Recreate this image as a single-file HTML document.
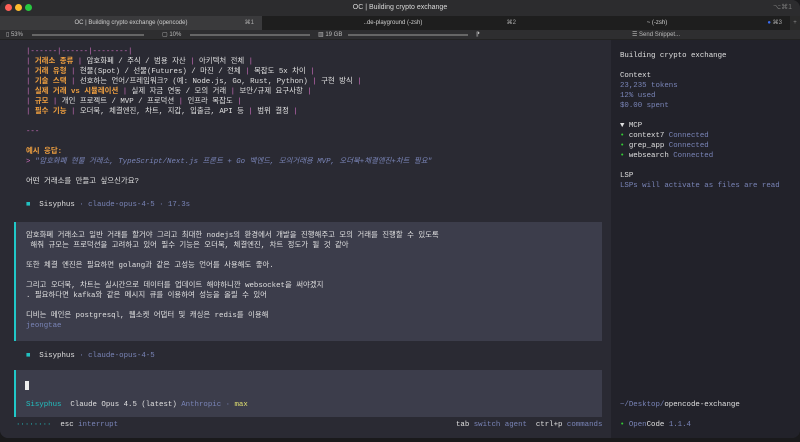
<!DOCTYPE html>
<html><head><meta charset="utf-8"><style>
*{margin:0;padding:0;box-sizing:border-box}
body{width:800px;height:442px;background:#1a1a1c;overflow:hidden;font-family:"Liberation Sans",sans-serif;position:relative}
.win{position:absolute;left:0;top:0;width:800px;height:438px;border-radius:8px;overflow:hidden;background:#282830}
.title{height:16px;background:#2c2c2e;color:#d8d8d8;font-size:7px;text-align:center;line-height:16px;position:relative}
.dot{position:absolute;top:4px;width:7px;height:7px;border-radius:50%}
.tabs{height:14px;display:flex;font-size:6px;color:#cfcfcf;line-height:14px;background:#1e1e1e}
.tab{position:relative;text-align:center}
.tab span.k{position:absolute;right:8px;color:#aaa}
.status{height:10px;background:#2e2e30;font-size:6px;color:#bbb;line-height:10px;position:relative;border-bottom:1px solid #222}
.status span{position:absolute;top:0}
.bar{position:absolute;top:4px;height:2px;background:#666}
.main{position:absolute;left:0;top:40px;width:611px;height:398px;background:#2a2a33}
.side{position:absolute;left:611px;top:40px;width:189px;height:398px;background:#22222a}
.t{position:absolute;font-family:"Liberation Mono","Noto Sans CJK KR",monospace;font-size:7.4px;white-space:pre;line-height:10px;color:#e0e0e0}
.o{color:#f0a040;font-weight:bold}.p{color:#d070c0}.g{color:#7a85b8}.c{color:#22c0c0}.y{color:#e0e070}
.blk{position:absolute;left:14px;width:588px;background:#3c3d4b;border-left:2px solid #20c8c8}
</style></head><body>
<div class="win">
<div class="title"><span class="dot" style="left:5px;background:#fe5f57"></span><span class="dot" style="left:15px;background:#febc2e"></span><span class="dot" style="left:25px;background:#28c840"></span>OC | Building crypto exchange<span style="position:absolute;right:8px;color:#777">⌥⌘1</span></div>
<div class="tabs"><div class="tab" style="width:262px;background:#3a3a3c">OC | Building crypto exchange (opencode)<span class="k">⌘1</span></div><div class="tab" style="width:262px">..de-playground (-zsh)<span class="k">⌘2</span></div><div class="tab" style="width:266px">~ (-zsh)<span class="k"><b style="color:#3b6cf0">●</b> ⌘3</span></div><div style="width:10px;background:#2a2a2a;color:#888;text-align:center">+</div></div>
<div class="status"><span style="left:6px">▯ 53%</span><div class="bar" style="left:32px;width:112px"></div><span style="left:162px">▢ 10%</span><div class="bar" style="left:190px;width:120px"></div><span style="left:318px">▥ 19 GB</span><div class="bar" style="left:348px;width:120px"></div><span style="left:476px">⁋</span><span style="left:632px">☰ Send Snippet...</span></div>
<div class="main"></div><div class="side"></div>
<div class="blk" style="top:222px;height:119px"></div>
<div class="blk" style="top:370px;height:47px"></div>
<div class="t" style="left:26px;top:47px"><span class="p">|------|------|--------|</span>
<span class="p">|</span> <span class="o">거래소 종류</span> <span class="p">|</span> 암호화폐 / 주식 / 범용 자산 <span class="p">|</span> 아키텍처 전체 <span class="p">|</span>
<span class="p">|</span> <span class="o">거래 유형</span> <span class="p">|</span> 현물(Spot) / 선물(Futures) / 마진 / 전체 <span class="p">|</span> 복잡도 5x 차이 <span class="p">|</span>
<span class="p">|</span> <span class="o">기술 스택</span> <span class="p">|</span> 선호하는 언어/프레임워크? (예: Node.js, Go, Rust, Python) <span class="p">|</span> 구현 방식 <span class="p">|</span>
<span class="p">|</span> <span class="o">실제 거래 vs 시뮬레이션</span> <span class="p">|</span> 실제 자금 연동 / 모의 거래 <span class="p">|</span> 보안/규제 요구사항 <span class="p">|</span>
<span class="p">|</span> <span class="o">규모</span> <span class="p">|</span> 개인 프로젝트 / MVP / 프로덕션 <span class="p">|</span> 인프라 복잡도 <span class="p">|</span>
<span class="p">|</span> <span class="o">필수 기능</span> <span class="p">|</span> 오더북, 체결엔진, 차트, 지갑, 입출금, API 등 <span class="p">|</span> 범위 결정 <span class="p">|</span>

<span class="p">---</span>

<span class="o">예시 응답:</span>
<span class="p">&gt;</span> <i class="g">"암호화폐 현물 거래소, TypeScript/Next.js 프론트 + Go 백엔드, 모의거래용 MVP, 오더북+체결엔진+차트 필요"</i>

어떤 거래소를 만들고 싶으신가요?</div>
<div class="t" style="left:26px;top:200px"><span class="c">■</span>  Sisyphus <span class="g">· claude-opus-4-5 · 17.3s</span></div>
<div class="t" style="left:26px;top:231px">암호화폐 거래소고 일반 거래를 할거야 그리고 최대한 nodejs의 환경에서 개발을 진행해주고 모의 거래를 진행할 수 있도록
 해줘 규모는 프로덕션을 고려하고 있어 필수 기능은 오더북, 체결엔진, 차트 정도가 될 것 같아

또한 체결 엔진은 필요하면 golang과 같은 고성능 언어를 사용해도 좋아.

그리고 오더북, 차트는 실시간으로 데이터를 업데이트 해야하니깐 websocket을 써야겠지
. 필요하다면 kafka와 같은 메시지 큐를 이용하여 성능을 올릴 수 있어

디비는 메인은 postgresql, 웹소켓 어댑터 및 캐싱은 redis를 이용해
<span class="g">jeongtae</span></div>
<div class="t" style="left:26px;top:351px"><span class="c">■</span>  Sisyphus <span class="g">· claude-opus-4-5</span></div>
<div style="position:absolute;left:25px;top:381px;width:4px;height:9px;background:#eee"></div>
<div class="t" style="left:26px;top:400px"><span class="c">Sisyphus</span>  Claude Opus 4.5 (latest) <span class="g">Anthropic · </span><span class="y">max</span></div>
<div class="t" style="left:16px;top:420px"><span class="c">········</span>  esc <span class="g">interrupt</span></div>
<div class="t" style="left:456px;top:420px">tab <span class="g">switch agent</span>  ctrl+p <span class="g">commands</span></div>
<div class="t" style="left:620px;top:51px">Building crypto exchange

Context
<span class="g">23,235 tokens
12% used
$0.00 spent</span>

▼ MCP
<span style="color:#3c3">•</span> context7 <span class="g">Connected</span>
<span style="color:#3c3">•</span> grep_app <span class="g">Connected</span>
<span style="color:#3c3">•</span> websearch <span class="g">Connected</span>

LSP
<span class="g">LSPs will activate as files are read</span></div>
<div class="t" style="left:620px;top:400px"><span class="g">~/Desktop/</span>opencode-exchange</div>
<div class="t" style="left:620px;top:420px"><span style="color:#3c3">•</span> <span class="g">Open</span>Code <span class="g">1.1.4</span></div>
</div>
</body></html>
